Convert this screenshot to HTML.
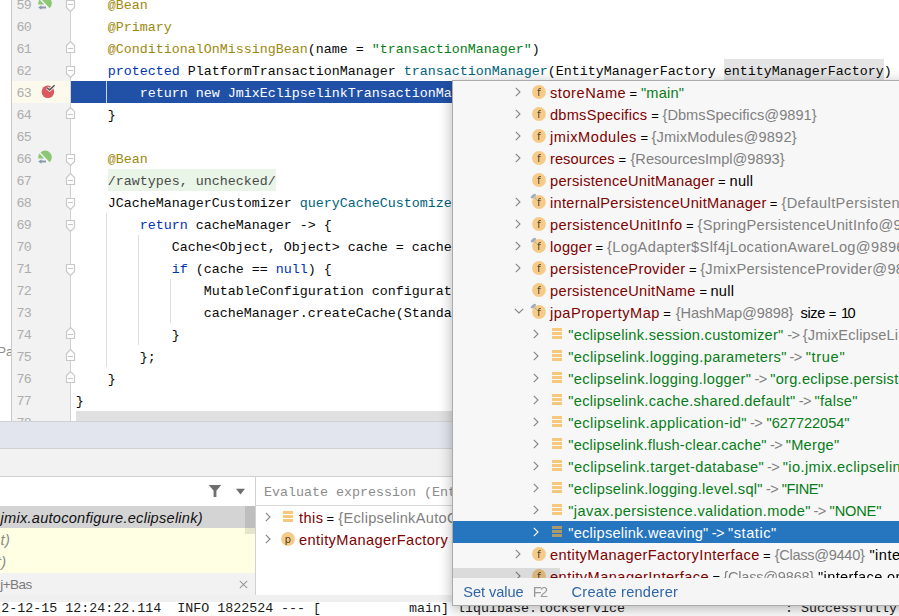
<!DOCTYPE html>
<html>
<head>
<meta charset="utf-8">
<title>Debugger</title>
<style>
html,body{margin:0;padding:0;}
body{width:899px;height:616px;overflow:hidden;position:relative;background:#fff;font-family:"Liberation Sans",sans-serif;}
.abs{position:absolute;}
.mono{font-family:"Liberation Mono",monospace;}
#editor{position:absolute;left:0;top:0;width:899px;height:421px;background:#fff;overflow:hidden;}
#leftstrip{position:absolute;left:0;top:0;width:11px;height:421px;background:#fff;border-right:1px solid #c9c9c9;}
#gutter{position:absolute;left:12px;top:0;width:58px;height:421px;background:#f2f2f2;}
#gutterline{position:absolute;left:70px;top:0;width:1px;height:421px;background:#d1d1d1;}
.ln{position:absolute;left:16.6px;width:20px;height:22px;line-height:22px;margin-top:2px;letter-spacing:-0.8px;font-family:"Liberation Mono",monospace;font-size:13.33px;color:#adadad;white-space:pre;}
.cl{position:absolute;left:75.8px;height:22px;line-height:22px;margin-top:2px;letter-spacing:0px;font-family:"Liberation Mono",monospace;font-size:13.33px;color:#080808;white-space:pre;}
.an{color:#9e880d;}
.kw{color:#0033b3;}
.st{color:#067d17;}
.fn{color:#00627a;}
.w{color:#fff;}
.hl{}
.sup{color:#4a4a4a;}
.guide{position:absolute;width:1px;background:#dedede;}
#popup{position:absolute;left:452px;top:80px;width:460px;height:524px;background:#f7f7f7;border:1px solid #ababab;box-shadow:0 3px 13px rgba(0,0,0,0.30);overflow:hidden;}
.row{position:absolute;left:0;width:460px;height:22px;}
.t{position:absolute;height:22px;line-height:22px;margin-top:1px;font-size:14.6px;white-space:pre;}
.eq{font-size:13px;margin-top:2px;}
.nm{color:#800000;}
.gr{color:#808080;}
.sv{color:#067d17;}
.bk{color:#000;}
.sel{background:#2675bf;}
.sel .sv,.sel .gr,.sel .bk{color:#fff;}
svg{position:absolute;overflow:visible;}
.ic{position:absolute;width:16px;height:16px;line-height:15.4px;text-align:center;font-family:"DejaVu Sans","Liberation Sans",sans-serif;font-size:10px;color:#4a3b29;will-change:transform;}
</style>
</head>
<body>
<div id="editor">
<div id="leftstrip"></div>
<div id="gutter"></div>
<div id="gutterline"></div>

<div class="abs" style="left:-2.8px;top:341px;width:13.8px;overflow:hidden;height:22px;line-height:22px;font-size:13.2px;color:#8c8c8c;white-space:pre">Pa</div>
<div class="abs" style="left:12px;top:81px;width:58px;height:22px;background:#fcfaed"></div>
<div class="abs" style="left:71px;top:81px;width:828px;height:22px;background:#2151a6"></div>
<div class="guide" style="left:106px;top:81px;height:22px;background:#c9d3ea"></div>
<div class="guide" style="left:106px;top:213px;height:154px"></div>
<div class="guide" style="left:138px;top:235px;height:110px"></div>
<div class="guide" style="left:170px;top:279px;height:44px"></div>
<div class="abs" style="left:723.5px;top:59px;width:160.5px;height:22px;background:#e4e4e4"></div>
<div class="abs" style="left:107.5px;top:169px;width:168.5px;height:22px;background:#e9f5e6"></div>
<div class="abs" style="left:76px;top:411px;width:823px;height:10px;background:#e0e0e0"></div>
<div class="ln" style="top:-7px">59</div>
<div class="ln" style="top:15px">60</div>
<div class="ln" style="top:37px">61</div>
<div class="ln" style="top:59px">62</div>
<div class="ln" style="top:81px">63</div>
<div class="ln" style="top:103px">64</div>
<div class="ln" style="top:125px">65</div>
<div class="ln" style="top:147px">66</div>
<div class="ln" style="top:169px">67</div>
<div class="ln" style="top:191px">68</div>
<div class="ln" style="top:213px">69</div>
<div class="ln" style="top:235px">70</div>
<div class="ln" style="top:257px">71</div>
<div class="ln" style="top:279px">72</div>
<div class="ln" style="top:301px">73</div>
<div class="ln" style="top:323px">74</div>
<div class="ln" style="top:345px">75</div>
<div class="ln" style="top:367px">76</div>
<div class="ln" style="top:389px">77</div>
<div class="ln" style="top:411px">78</div>
<svg style="left:0;top:0" width="100" height="421"><polygon points="66.5,0.5 74.5,0.5 74.5,7.5 70.5,11.5 66.5,7.5" fill="#fff" stroke="#c8c8c8" stroke-width="1.2"/><line x1="68" y1="4.5" x2="73" y2="4.5" stroke="#c6c6c6" stroke-width="1"/></svg>
<svg style="left:0;top:0" width="100" height="421"><polygon points="66.5,52.5 74.5,52.5 74.5,45.5 70.5,41.5 66.5,45.5" fill="#fff" stroke="#c8c8c8" stroke-width="1.2"/><line x1="68" y1="48.5" x2="73" y2="48.5" stroke="#c6c6c6" stroke-width="1"/></svg>
<svg style="left:0;top:0" width="100" height="421"><polygon points="66.5,66.5 74.5,66.5 74.5,73.5 70.5,77.5 66.5,73.5" fill="#fff" stroke="#c8c8c8" stroke-width="1.2"/><line x1="68" y1="70.5" x2="73" y2="70.5" stroke="#c6c6c6" stroke-width="1"/></svg>
<svg style="left:0;top:0" width="100" height="421"><polygon points="66.5,118.5 74.5,118.5 74.5,111.5 70.5,107.5 66.5,111.5" fill="#fff" stroke="#c8c8c8" stroke-width="1.2"/><line x1="68" y1="114.5" x2="73" y2="114.5" stroke="#c6c6c6" stroke-width="1"/></svg>
<svg style="left:0;top:0" width="100" height="421"><polygon points="66.5,154.5 74.5,154.5 74.5,161.5 70.5,165.5 66.5,161.5" fill="#fff" stroke="#c8c8c8" stroke-width="1.2"/><line x1="68" y1="158.5" x2="73" y2="158.5" stroke="#c6c6c6" stroke-width="1"/></svg>
<svg style="left:0;top:0" width="100" height="421"><polygon points="66.5,184.5 74.5,184.5 74.5,177.5 70.5,173.5 66.5,177.5" fill="#fff" stroke="#c8c8c8" stroke-width="1.2"/><line x1="68" y1="180.5" x2="73" y2="180.5" stroke="#c6c6c6" stroke-width="1"/></svg>
<svg style="left:0;top:0" width="100" height="421"><polygon points="66.5,198.5 74.5,198.5 74.5,205.5 70.5,209.5 66.5,205.5" fill="#fff" stroke="#c8c8c8" stroke-width="1.2"/><line x1="68" y1="202.5" x2="73" y2="202.5" stroke="#c6c6c6" stroke-width="1"/></svg>
<svg style="left:0;top:0" width="100" height="421"><polygon points="66.5,220.5 74.5,220.5 74.5,227.5 70.5,231.5 66.5,227.5" fill="#fff" stroke="#c8c8c8" stroke-width="1.2"/><line x1="68" y1="224.5" x2="73" y2="224.5" stroke="#c6c6c6" stroke-width="1"/></svg>
<svg style="left:0;top:0" width="100" height="421"><polygon points="66.5,264.5 74.5,264.5 74.5,271.5 70.5,275.5 66.5,271.5" fill="#fff" stroke="#c8c8c8" stroke-width="1.2"/><line x1="68" y1="268.5" x2="73" y2="268.5" stroke="#c6c6c6" stroke-width="1"/></svg>
<svg style="left:0;top:0" width="100" height="421"><polygon points="66.5,338.5 74.5,338.5 74.5,331.5 70.5,327.5 66.5,331.5" fill="#fff" stroke="#c8c8c8" stroke-width="1.2"/><line x1="68" y1="334.5" x2="73" y2="334.5" stroke="#c6c6c6" stroke-width="1"/></svg>
<svg style="left:0;top:0" width="100" height="421"><polygon points="66.5,360.5 74.5,360.5 74.5,353.5 70.5,349.5 66.5,353.5" fill="#fff" stroke="#c8c8c8" stroke-width="1.2"/><line x1="68" y1="356.5" x2="73" y2="356.5" stroke="#c6c6c6" stroke-width="1"/></svg>
<svg style="left:0;top:0" width="100" height="421"><polygon points="66.5,382.5 74.5,382.5 74.5,375.5 70.5,371.5 66.5,375.5" fill="#fff" stroke="#c8c8c8" stroke-width="1.2"/><line x1="68" y1="378.5" x2="73" y2="378.5" stroke="#c6c6c6" stroke-width="1"/></svg>
<svg style="left:37px;top:-4px" width="16" height="16" viewBox="0 0 16 16">
<path d="M3.5 2.4 A6.7 6.7 0 0 1 12.7 12.2 Z" fill="#8cc873"/>
<path d="M1.3 8.4 A6.7 6.7 0 0 1 2.5 3.6 L7.2 8.4 Z" fill="#8cc873"/>
<path d="M1.2 11.5 L4.5 9.2 L4.5 10.5 L9 10.5 L9 12.5 L4.5 12.5 L4.5 13.8 Z" fill="#8a9bab"/>
</svg>
<svg style="left:37px;top:150px" width="16" height="16" viewBox="0 0 16 16">
<path d="M3.5 2.4 A6.7 6.7 0 0 1 12.7 12.2 Z" fill="#8cc873"/>
<path d="M1.3 8.4 A6.7 6.7 0 0 1 2.5 3.6 L7.2 8.4 Z" fill="#8cc873"/>
<path d="M1.2 11.5 L4.5 9.2 L4.5 10.5 L9 10.5 L9 12.5 L4.5 12.5 L4.5 13.8 Z" fill="#8a9bab"/>
</svg>
<svg style="left:40px;top:84px" width="16" height="16" viewBox="0 0 16 16">
<circle cx="7.9" cy="7.8" r="6.3" fill="#db5860"/>
<path d="M7 3.8 L9.6 5.9 L14.6 1.2" fill="none" stroke="#fcfaed" stroke-width="3.2"/>
<path d="M7 3.8 L9.6 5.9 L14.6 1.2" fill="none" stroke="#55595c" stroke-width="1.5"/>
</svg>
<div class="cl" style="top:-7px">    <span class="an">@Bean</span></div>
<div class="cl" style="top:15px">    <span class="an">@Primary</span></div>
<div class="cl" style="top:37px">    <span class="an">@ConditionalOnMissingBean</span>(name = <span class="st">&quot;transactionManager&quot;</span>)</div>
<div class="cl" style="top:59px">    <span class="kw">protected</span> PlatformTransactionManager <span class="fn">transactionManager</span>(EntityManagerFactory <span class="hl">entityManagerFactory</span>)</div>
<div class="cl" style="top:81px">        <span class="w">return new JmixEclipselinkTransactionManager</span></div>
<div class="cl" style="top:103px">    }</div>
<div class="cl" style="top:147px">    <span class="an">@Bean</span></div>
<div class="cl" style="top:169px">    <span class="sup">/rawtypes, unchecked/</span></div>
<div class="cl" style="top:191px">    JCacheManagerCustomizer <span class="fn">queryCacheCustomizer</span></div>
<div class="cl" style="top:213px">        <span class="kw">return</span> cacheManager -&gt; {</div>
<div class="cl" style="top:235px">            Cache&lt;Object, Object&gt; cache = cacheManager</div>
<div class="cl" style="top:257px">            <span class="kw">if</span> (cache == <span class="kw">null</span>) {</div>
<div class="cl" style="top:279px">                MutableConfiguration configuration</div>
<div class="cl" style="top:301px">                cacheManager.createCache(Standard</div>
<div class="cl" style="top:323px">            }</div>
<div class="cl" style="top:345px">        };</div>
<div class="cl" style="top:367px">    }</div>
<div class="cl" style="top:389px">}</div>
</div>
<div class="abs" style="left:0;top:421px;width:899px;height:1px;background:#d1d1d1"></div>
<div class="abs" style="left:0;top:422px;width:899px;height:26px;background:#e2e5ee"></div>
<div class="abs" style="left:0;top:448px;width:899px;height:1px;background:#d1d1d1"></div>
<div class="abs" style="left:0;top:449px;width:899px;height:27px;background:#f2f2f2"></div>
<div class="abs" style="left:0;top:476px;width:899px;height:1px;background:#d1d1d1"></div>
<div class="abs" style="left:0;top:506px;width:255px;height:22px;background:#d4d4d4"></div>
<div class="abs" style="left:0;top:528px;width:255px;height:45px;background:#ffffe4"></div>
<div class="abs" style="left:245px;top:506px;width:10px;height:28px;background:rgba(0,0,0,0.10)"></div>
<div class="abs" style="left:0;top:573px;width:255px;height:22px;background:#f2f2f2"></div>
<div class="abs" style="left:0;top:595px;width:899px;height:7px;background:#f0f0f0"></div>
<div class="abs" style="left:255px;top:477px;width:1px;height:118px;background:#d1d1d1"></div>
<div class="abs" style="left:256px;top:505px;width:643px;height:1px;background:#d9d9d9"></div>
<svg style="left:208px;top:484px" width="40" height="14" viewBox="0 0 40 14">
<path d="M0.8 1 H13.2 L8.4 6.8 V13 H5.6 V6.8 Z" fill="#6e6e6e"/>
<path d="M28 4.8 H37 L32.5 10.4 Z" fill="#6e6e6e"/></svg>
<div class="t" style="left:0.6px;top:506px;font-style:italic;color:#111;letter-spacing:0.245px">jmix.autoconfigure.eclipselink)</div>
<div class="t" style="left:0.5px;top:528px;font-style:italic;color:#8a8a8a;letter-spacing:0.5px">t)</div>
<div class="t" style="left:-3.2px;top:550px;font-style:italic;color:#8a8a8a;letter-spacing:0.5px">t)</div>
<div class="t" style="left:0.3px;top:573px;color:#7a7a7a;font-size:13.5px;letter-spacing:-0.55px">j+Bas</div>
<svg style="left:239px;top:580px" width="9" height="9" viewBox="0 0 9 9"><path d="M0.8 0.8 L8.2 8.2 M8.2 0.8 L0.8 8.2" stroke="#9a9a9a" stroke-width="1.1" fill="none"/></svg>
<div class="abs mono" style="left:264px;top:482px;height:22px;line-height:22px;font-size:13.33px;letter-spacing:0px;color:#8c8c8c;white-space:pre">Evaluate expression (Enter) or add a watch</div>
<svg style="left:264.5px;top:511.5px" width="6" height="10" viewBox="0 0 6 10"><path d="M0.8 0.8 L5 5 L0.8 9.2" fill="none" stroke="#848484" stroke-width="1.1"/></svg>
<div class="abs" style="left:283px;top:511px;width:10px;height:3px;background:#f5c87d"></div><div class="abs" style="left:283px;top:515px;width:10px;height:3px;background:#f5c87d"></div><div class="abs" style="left:283px;top:519px;width:10px;height:3px;background:#f5c87d"></div>
<svg style="left:264.5px;top:533.5px" width="6" height="10" viewBox="0 0 6 10"><path d="M0.8 0.8 L5 5 L0.8 9.2" fill="none" stroke="#848484" stroke-width="1.1"/></svg>
<svg style="left:279.7px;top:531px" width="16" height="16" viewBox="0 0 16 16"><circle cx="8" cy="8" r="6.9" fill="#f5cb87"/></svg><div class="ic" style="left:279.7px;top:532px">p</div>
<div class="t nm" style="left:299px;top:506px;letter-spacing:0.427px">this</div>
<div class="t bk eq" style="left:326.4px;top:506px;letter-spacing:0px">=</div>
<div class="t gr" style="left:338.3px;top:506px;letter-spacing:0.3px">{EclipselinkAutoConfiguration@9884}</div>
<div class="t nm" style="left:299px;top:528px;letter-spacing:0.408px">entityManagerFactory</div>
<div class="t bk" style="left:451.5px;top:528px;letter-spacing:0.3px">= {LocalContainerEntityManagerFactoryBean@9885}</div>
<div class="abs mono" style="left:1.2px;top:598px;height:22px;line-height:22px;font-size:13.33px;letter-spacing:0px;color:#1a1a1a;white-space:pre">2-12-15 12:24:22.114  INFO 1822524 --- [           main] liquibase.lockservice                    : Successfully acquired change log lock</div>
<div id="popup">
<div class="row" style="top:0px">
<svg style="left:62px;top:5.5px" width="6" height="10" viewBox="0 0 6 10"><path d="M0.8 0.8 L5 5 L0.8 9.2" fill="none" stroke="#848484" stroke-width="1.1"/></svg>
<svg style="left:78px;top:3px" width="16" height="16" viewBox="0 0 16 16"><circle cx="8" cy="8" r="6.9" fill="#f5cb87"/></svg><div class="ic" style="left:78px;top:4px">f</div>
<span class="t nm" style="left:97px;top:0;letter-spacing:0.541px">storeName</span>
<span class="t bk eq" style="left:176.4px;top:0;letter-spacing:0px">=</span>
<span class="t sv" style="left:188.0px;top:0;letter-spacing:0.18px">&quot;main&quot;</span>
</div>
<div class="row" style="top:22px">
<svg style="left:62px;top:5.5px" width="6" height="10" viewBox="0 0 6 10"><path d="M0.8 0.8 L5 5 L0.8 9.2" fill="none" stroke="#848484" stroke-width="1.1"/></svg>
<svg style="left:78px;top:3px" width="16" height="16" viewBox="0 0 16 16"><circle cx="8" cy="8" r="6.9" fill="#f5cb87"/></svg><div class="ic" style="left:78px;top:4px">f</div>
<span class="t nm" style="left:97px;top:0;letter-spacing:0.242px">dbmsSpecifics</span>
<span class="t bk eq" style="left:198.2px;top:0;letter-spacing:0px">=</span>
<span class="t gr" style="left:209.5px;top:0;letter-spacing:0.029px">{DbmsSpecifics@9891}</span>
</div>
<div class="row" style="top:44px">
<svg style="left:62px;top:5.5px" width="6" height="10" viewBox="0 0 6 10"><path d="M0.8 0.8 L5 5 L0.8 9.2" fill="none" stroke="#848484" stroke-width="1.1"/></svg>
<svg style="left:78px;top:3px" width="16" height="16" viewBox="0 0 16 16"><circle cx="8" cy="8" r="6.9" fill="#f5cb87"/></svg><div class="ic" style="left:78px;top:4px">f</div>
<span class="t nm" style="left:97px;top:0;letter-spacing:0.529px">jmixModules</span>
<span class="t bk eq" style="left:187.4px;top:0;letter-spacing:0px">=</span>
<span class="t gr" style="left:198.4px;top:0;letter-spacing:0.177px">{JmixModules@9892}</span>
</div>
<div class="row" style="top:66px">
<svg style="left:62px;top:5.5px" width="6" height="10" viewBox="0 0 6 10"><path d="M0.8 0.8 L5 5 L0.8 9.2" fill="none" stroke="#848484" stroke-width="1.1"/></svg>
<svg style="left:78px;top:3px" width="16" height="16" viewBox="0 0 16 16"><circle cx="8" cy="8" r="6.9" fill="#f5cb87"/></svg><div class="ic" style="left:78px;top:4px">f</div>
<span class="t nm" style="left:97px;top:0;letter-spacing:0.065px">resources</span>
<span class="t bk eq" style="left:165.4px;top:0;letter-spacing:0px">=</span>
<span class="t gr" style="left:177.5px;top:0;letter-spacing:-0.014px">{ResourcesImpl@9893}</span>
</div>
<div class="row" style="top:88px">
<svg style="left:78px;top:3px" width="16" height="16" viewBox="0 0 16 16"><circle cx="8" cy="8" r="6.9" fill="#f5cb87"/></svg><div class="ic" style="left:78px;top:4px">f</div>
<span class="t nm" style="left:97px;top:0;letter-spacing:0.301px">persistenceUnitManager</span>
<span class="t bk eq" style="left:264.9px;top:0;letter-spacing:0px">=</span>
<span class="t bk" style="left:276.5px;top:0;letter-spacing:0.294px">null</span>
</div>
<div class="row" style="top:110px">
<svg style="left:62px;top:5.5px" width="6" height="10" viewBox="0 0 6 10"><path d="M0.8 0.8 L5 5 L0.8 9.2" fill="none" stroke="#848484" stroke-width="1.1"/></svg>
<svg style="left:78px;top:3px" width="16" height="16" viewBox="0 0 16 16"><circle cx="8" cy="8" r="6.9" fill="#f5cb87"/><ellipse cx="2.4" cy="2.2" rx="3.1" ry="1.55" transform="rotate(-38 2.4 2.2)" fill="#a0adbd"/><path d="M4 4 L5.6 5.6" stroke="#86a2c9" stroke-width="0.9"/></svg><div class="ic" style="left:78px;top:4px">f</div>
<span class="t nm" style="left:97px;top:0;letter-spacing:0.301px">internalPersistenceUnitManager</span>
<span class="t bk eq" style="left:316.7px;top:0;letter-spacing:0px">=</span>
<span class="t gr" style="left:328.4px;top:0;letter-spacing:0.39px">{DefaultPersistenceUnitManager@9894}</span>
</div>
<div class="row" style="top:132px">
<svg style="left:62px;top:5.5px" width="6" height="10" viewBox="0 0 6 10"><path d="M0.8 0.8 L5 5 L0.8 9.2" fill="none" stroke="#848484" stroke-width="1.1"/></svg>
<svg style="left:78px;top:3px" width="16" height="16" viewBox="0 0 16 16"><circle cx="8" cy="8" r="6.9" fill="#f5cb87"/></svg><div class="ic" style="left:78px;top:4px">f</div>
<span class="t nm" style="left:97px;top:0;letter-spacing:0.398px">persistenceUnitInfo</span>
<span class="t bk eq" style="left:232.9px;top:0;letter-spacing:0px">=</span>
<span class="t gr" style="left:244.5px;top:0;letter-spacing:0.28px">{SpringPersistenceUnitInfo@9895}</span>
</div>
<div class="row" style="top:154px">
<svg style="left:62px;top:5.5px" width="6" height="10" viewBox="0 0 6 10"><path d="M0.8 0.8 L5 5 L0.8 9.2" fill="none" stroke="#848484" stroke-width="1.1"/></svg>
<svg style="left:78px;top:3px" width="16" height="16" viewBox="0 0 16 16"><circle cx="8" cy="8" r="6.9" fill="#f5cb87"/><ellipse cx="2.4" cy="2.2" rx="3.1" ry="1.55" transform="rotate(-38 2.4 2.2)" fill="#a0adbd"/><path d="M4 4 L5.6 5.6" stroke="#86a2c9" stroke-width="0.9"/></svg><div class="ic" style="left:78px;top:4px">f</div>
<span class="t nm" style="left:97px;top:0;letter-spacing:0.284px">logger</span>
<span class="t bk eq" style="left:142.4px;top:0;letter-spacing:0px">=</span>
<span class="t gr" style="left:154px;top:0;letter-spacing:0.344px">{LogAdapter$Slf4jLocationAwareLog@9896}</span>
</div>
<div class="row" style="top:176px">
<svg style="left:62px;top:5.5px" width="6" height="10" viewBox="0 0 6 10"><path d="M0.8 0.8 L5 5 L0.8 9.2" fill="none" stroke="#848484" stroke-width="1.1"/></svg>
<svg style="left:78px;top:3px" width="16" height="16" viewBox="0 0 16 16"><circle cx="8" cy="8" r="6.9" fill="#f5cb87"/></svg><div class="ic" style="left:78px;top:4px">f</div>
<span class="t nm" style="left:97px;top:0;letter-spacing:0.34px">persistenceProvider</span>
<span class="t bk eq" style="left:235.9px;top:0;letter-spacing:0px">=</span>
<span class="t gr" style="left:247.2px;top:0;letter-spacing:0.28px">{JmixPersistenceProvider@9897}</span>
</div>
<div class="row" style="top:198px">
<svg style="left:78px;top:3px" width="16" height="16" viewBox="0 0 16 16"><circle cx="8" cy="8" r="6.9" fill="#f5cb87"/></svg><div class="ic" style="left:78px;top:4px">f</div>
<span class="t nm" style="left:97px;top:0;letter-spacing:0.327px">persistenceUnitName</span>
<span class="t bk eq" style="left:246.4px;top:0;letter-spacing:0px">=</span>
<span class="t bk" style="left:257.4px;top:0;letter-spacing:0.327px">null</span>
</div>
<div class="row" style="top:220px">
<svg style="left:60.599999999999994px;top:7.4px" width="10" height="6" viewBox="0 0 10 6"><path d="M0.8 0.8 L5 5 L9.2 0.8" fill="none" stroke="#848484" stroke-width="1.1"/></svg>
<svg style="left:78px;top:3px" width="16" height="16" viewBox="0 0 16 16"><circle cx="8" cy="8" r="6.9" fill="#f5cb87"/><ellipse cx="2.4" cy="2.2" rx="3.1" ry="1.55" transform="rotate(-38 2.4 2.2)" fill="#a0adbd"/><path d="M4 4 L5.6 5.6" stroke="#86a2c9" stroke-width="0.9"/></svg><div class="ic" style="left:78px;top:4px">f</div>
<span class="t nm" style="left:97px;top:0;letter-spacing:0.49px">jpaPropertyMap</span>
<span class="t bk eq" style="left:210.2px;top:0;letter-spacing:0px">=</span>
<span class="t gr" style="left:222.8px;top:0;letter-spacing:-0.138px">{HashMap@9898}</span>
<span class="t bk" style="left:347.5px;top:0;letter-spacing:-0.351px">size</span>
<span class="t bk eq" style="left:375.7px;top:0;letter-spacing:0px">=</span>
<span class="t bk" style="left:387.9px;top:0;letter-spacing:-1.534px">10</span>
</div>
<div class="row" style="top:242px">
<svg style="left:80px;top:5.5px" width="6" height="10" viewBox="0 0 6 10"><path d="M0.8 0.8 L5 5 L0.8 9.2" fill="none" stroke="#848484" stroke-width="1.1"/></svg>
<div class="abs" style="left:99px;top:5px;width:10px;height:3px;background:#f5c87d"></div><div class="abs" style="left:99px;top:9px;width:10px;height:3px;background:#f5c87d"></div><div class="abs" style="left:99px;top:13px;width:10px;height:3px;background:#f5c87d"></div>
<span class="t sv" style="left:115.3px;top:0;letter-spacing:0.295px">&quot;eclipselink.session.customizer&quot;</span>
<span class="t gr" style="left:334.3px;top:0;letter-spacing:-0.6px">-&gt;</span>
<span class="t gr" style="left:349.7px;top:0;letter-spacing:0.163px">{JmixEclipseLinkSessionCustomizer@9899}</span>
</div>
<div class="row" style="top:264px">
<svg style="left:80px;top:5.5px" width="6" height="10" viewBox="0 0 6 10"><path d="M0.8 0.8 L5 5 L0.8 9.2" fill="none" stroke="#848484" stroke-width="1.1"/></svg>
<div class="abs" style="left:99px;top:5px;width:10px;height:3px;background:#f5c87d"></div><div class="abs" style="left:99px;top:9px;width:10px;height:3px;background:#f5c87d"></div><div class="abs" style="left:99px;top:13px;width:10px;height:3px;background:#f5c87d"></div>
<span class="t sv" style="left:115.3px;top:0;letter-spacing:0.369px">&quot;eclipselink.logging.parameters&quot;</span>
<span class="t gr" style="left:336.5px;top:0;letter-spacing:-0.6px">-&gt;</span>
<span class="t sv" style="left:352.7px;top:0;letter-spacing:0.677px">&quot;true&quot;</span>
</div>
<div class="row" style="top:286px">
<svg style="left:80px;top:5.5px" width="6" height="10" viewBox="0 0 6 10"><path d="M0.8 0.8 L5 5 L0.8 9.2" fill="none" stroke="#848484" stroke-width="1.1"/></svg>
<div class="abs" style="left:99px;top:5px;width:10px;height:3px;background:#f5c87d"></div><div class="abs" style="left:99px;top:9px;width:10px;height:3px;background:#f5c87d"></div><div class="abs" style="left:99px;top:13px;width:10px;height:3px;background:#f5c87d"></div>
<span class="t sv" style="left:115.3px;top:0;letter-spacing:0.339px">&quot;eclipselink.logging.logger&quot;</span>
<span class="t gr" style="left:301.5px;top:0;letter-spacing:-0.6px">-&gt;</span>
<span class="t sv" style="left:317.2px;top:0;letter-spacing:0.274px">&quot;org.eclipse.persistence.logging.slf4j.SLF4JLogger&quot;</span>
</div>
<div class="row" style="top:308px">
<svg style="left:80px;top:5.5px" width="6" height="10" viewBox="0 0 6 10"><path d="M0.8 0.8 L5 5 L0.8 9.2" fill="none" stroke="#848484" stroke-width="1.1"/></svg>
<div class="abs" style="left:99px;top:5px;width:10px;height:3px;background:#f5c87d"></div><div class="abs" style="left:99px;top:9px;width:10px;height:3px;background:#f5c87d"></div><div class="abs" style="left:99px;top:13px;width:10px;height:3px;background:#f5c87d"></div>
<span class="t sv" style="left:115.3px;top:0;letter-spacing:0.296px">&quot;eclipselink.cache.shared.default&quot;</span>
<span class="t gr" style="left:345.8px;top:0;letter-spacing:-0.6px">-&gt;</span>
<span class="t sv" style="left:361.5px;top:0;letter-spacing:0.285px">&quot;false&quot;</span>
</div>
<div class="row" style="top:330px">
<svg style="left:80px;top:5.5px" width="6" height="10" viewBox="0 0 6 10"><path d="M0.8 0.8 L5 5 L0.8 9.2" fill="none" stroke="#848484" stroke-width="1.1"/></svg>
<div class="abs" style="left:99px;top:5px;width:10px;height:3px;background:#f5c87d"></div><div class="abs" style="left:99px;top:9px;width:10px;height:3px;background:#f5c87d"></div><div class="abs" style="left:99px;top:13px;width:10px;height:3px;background:#f5c87d"></div>
<span class="t sv" style="left:115.3px;top:0;letter-spacing:0.387px">&quot;eclipselink.application-id&quot;</span>
<span class="t gr" style="left:297.0px;top:0;letter-spacing:-0.6px">-&gt;</span>
<span class="t sv" style="left:313.6px;top:0;letter-spacing:-0.052px">&quot;627722054&quot;</span>
</div>
<div class="row" style="top:352px">
<svg style="left:80px;top:5.5px" width="6" height="10" viewBox="0 0 6 10"><path d="M0.8 0.8 L5 5 L0.8 9.2" fill="none" stroke="#848484" stroke-width="1.1"/></svg>
<div class="abs" style="left:99px;top:5px;width:10px;height:3px;background:#f5c87d"></div><div class="abs" style="left:99px;top:9px;width:10px;height:3px;background:#f5c87d"></div><div class="abs" style="left:99px;top:13px;width:10px;height:3px;background:#f5c87d"></div>
<span class="t sv" style="left:115.3px;top:0;letter-spacing:0.231px">&quot;eclipselink.flush-clear.cache&quot;</span>
<span class="t gr" style="left:317.0px;top:0;letter-spacing:-0.6px">-&gt;</span>
<span class="t sv" style="left:332.7px;top:0;letter-spacing:0.294px">&quot;Merge&quot;</span>
</div>
<div class="row" style="top:374px">
<svg style="left:80px;top:5.5px" width="6" height="10" viewBox="0 0 6 10"><path d="M0.8 0.8 L5 5 L0.8 9.2" fill="none" stroke="#848484" stroke-width="1.1"/></svg>
<div class="abs" style="left:99px;top:5px;width:10px;height:3px;background:#f5c87d"></div><div class="abs" style="left:99px;top:9px;width:10px;height:3px;background:#f5c87d"></div><div class="abs" style="left:99px;top:13px;width:10px;height:3px;background:#f5c87d"></div>
<span class="t sv" style="left:115.3px;top:0;letter-spacing:0.412px">&quot;eclipselink.target-database&quot;</span>
<span class="t gr" style="left:313.9px;top:0;letter-spacing:-0.6px">-&gt;</span>
<span class="t sv" style="left:329.7px;top:0;letter-spacing:0.412px">&quot;io.jmix.eclipselink.impl.dbms.JmixPostgreSQLPlatform&quot;</span>
</div>
<div class="row" style="top:396px">
<svg style="left:80px;top:5.5px" width="6" height="10" viewBox="0 0 6 10"><path d="M0.8 0.8 L5 5 L0.8 9.2" fill="none" stroke="#848484" stroke-width="1.1"/></svg>
<div class="abs" style="left:99px;top:5px;width:10px;height:3px;background:#f5c87d"></div><div class="abs" style="left:99px;top:9px;width:10px;height:3px;background:#f5c87d"></div><div class="abs" style="left:99px;top:13px;width:10px;height:3px;background:#f5c87d"></div>
<span class="t sv" style="left:115.3px;top:0;letter-spacing:0.287px">&quot;eclipselink.logging.level.sql&quot;</span>
<span class="t gr" style="left:313.0px;top:0;letter-spacing:-0.6px">-&gt;</span>
<span class="t sv" style="left:328.7px;top:0;letter-spacing:-0.402px">&quot;FINE&quot;</span>
</div>
<div class="row" style="top:418px">
<svg style="left:80px;top:5.5px" width="6" height="10" viewBox="0 0 6 10"><path d="M0.8 0.8 L5 5 L0.8 9.2" fill="none" stroke="#848484" stroke-width="1.1"/></svg>
<div class="abs" style="left:99px;top:5px;width:10px;height:3px;background:#f5c87d"></div><div class="abs" style="left:99px;top:9px;width:10px;height:3px;background:#f5c87d"></div><div class="abs" style="left:99px;top:13px;width:10px;height:3px;background:#f5c87d"></div>
<span class="t sv" style="left:115.3px;top:0;letter-spacing:0.374px">&quot;javax.persistence.validation.mode&quot;</span>
<span class="t gr" style="left:360.5px;top:0;letter-spacing:-0.6px">-&gt;</span>
<span class="t sv" style="left:376.6px;top:0;letter-spacing:-0.146px">&quot;NONE&quot;</span>
</div>
<div class="row sel" style="top:440px">
<svg style="left:80px;top:5.5px" width="6" height="10" viewBox="0 0 6 10"><path d="M0.8 0.8 L5 5 L0.8 9.2" fill="none" stroke="#fff" stroke-width="1.1"/></svg>
<div class="abs" style="left:99px;top:5px;width:10px;height:3px;background:#ad9a6b"></div><div class="abs" style="left:99px;top:9px;width:10px;height:3px;background:#ad9a6b"></div><div class="abs" style="left:99px;top:13px;width:10px;height:3px;background:#ad9a6b"></div>
<span class="t sv" style="left:115.3px;top:0;letter-spacing:0.235px">&quot;eclipselink.weaving&quot;</span>
<span class="t gr" style="left:258.8px;top:0;letter-spacing:-0.6px">-&gt;</span>
<span class="t sv" style="left:275.0px;top:0;letter-spacing:0.537px">&quot;static&quot;</span>
</div>
<div class="row" style="top:462px">
<svg style="left:62px;top:5.5px" width="6" height="10" viewBox="0 0 6 10"><path d="M0.8 0.8 L5 5 L0.8 9.2" fill="none" stroke="#848484" stroke-width="1.1"/></svg>
<svg style="left:78px;top:3px" width="16" height="16" viewBox="0 0 16 16"><circle cx="8" cy="8" r="6.9" fill="#f5cb87"/></svg><div class="ic" style="left:78px;top:4px">f</div>
<span class="t nm" style="left:97px;top:0;letter-spacing:0.406px">entityManagerFactoryInterface</span>
<span class="t bk eq" style="left:310.0px;top:0;letter-spacing:0px">=</span>
<span class="t gr" style="left:321.7px;top:0;letter-spacing:-0.303px">{Class@9440}</span>
<span class="t bk" style="left:416.4px;top:0;letter-spacing:0.52px">&quot;interface javax.persistence.EntityManagerFactory&quot;</span>
</div>
<div class="row" style="top:484px">
<svg style="left:62px;top:5.5px" width="6" height="10" viewBox="0 0 6 10"><path d="M0.8 0.8 L5 5 L0.8 9.2" fill="none" stroke="#848484" stroke-width="1.1"/></svg>
<svg style="left:78px;top:3px" width="16" height="16" viewBox="0 0 16 16"><circle cx="8" cy="8" r="6.9" fill="#f5cb87"/></svg><div class="ic" style="left:78px;top:4px">f</div>
<span class="t nm" style="left:97px;top:0;letter-spacing:0.449px">entityManagerInterface</span>
<span class="t bk eq" style="left:259.4px;top:0;letter-spacing:0px">=</span>
<span class="t gr" style="left:270.3px;top:0;letter-spacing:-0.23px">{Class@9868}</span>
<span class="t bk" style="left:365.1px;top:0;letter-spacing:0.343px">&quot;interface org.eclipse.persistence.jpa.JpaEntityManager&quot;</span>
</div>
<div class="abs" style="left:0;top:487px;width:107px;height:10px;background:rgba(0,0,0,0.11)"></div>
<div class="abs" style="left:0;top:497px;width:460px;height:28px;background:#f5f5f5"></div>
<div class="t" style="left:10.3px;top:499px;color:#2f65a8;letter-spacing:-0.057px">Set value</div>
<div class="t" style="left:79.8px;top:499px;color:#9a9a9a;letter-spacing:-1.631px">F2</div>
<div class="t" style="left:118.6px;top:499px;color:#2f65a8;letter-spacing:0.233px">Create renderer</div>
</div>
</body></html>
